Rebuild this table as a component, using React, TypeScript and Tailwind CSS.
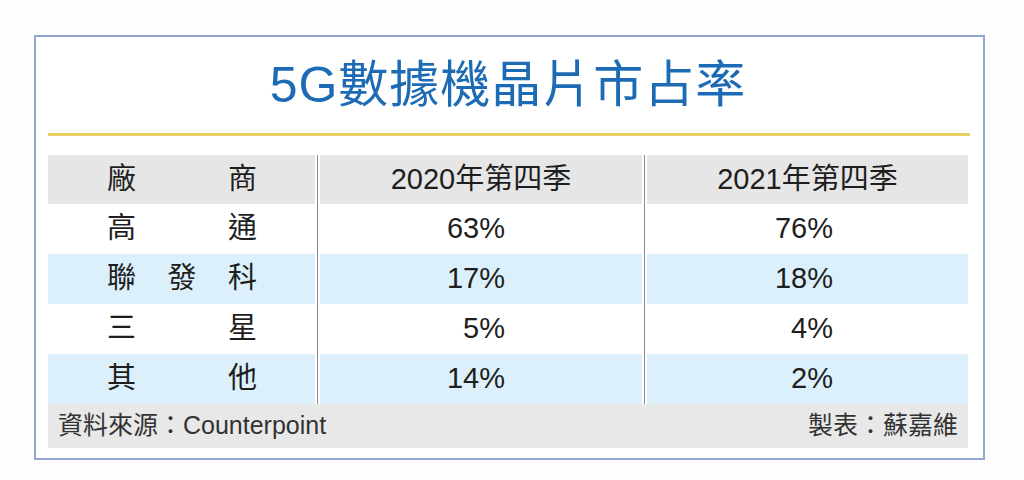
import React from 'react';

type Row = { name: string[]; a: string; b: string; blue: boolean };

const rows: Row[] = [
  { name: ['高', '通'], a: '63%', b: '76%', blue: false },
  { name: ['聯', '發', '科'], a: '17%', b: '18%', blue: true },
  { name: ['三', '星'], a: '5%', b: '4%', blue: false },
  { name: ['其', '他'], a: '14%', b: '2%', blue: true },
];

const font = { fontFamily: '"Liberation Sans", "Noto Sans CJK TC", sans-serif' };

// 欄與欄之間的白縫 + 灰色直線
const Divider = () => (
  <div className="w-[5px] h-full flex justify-center bg-white">
    <div className="w-px h-full bg-[#8a8a8a]" />
  </div>
);

const App: React.FC = () => {
  return (
    <div className="w-[1024px] h-[480px] bg-[#fdfdfd] pt-[35px] pl-[34px]" style={font}>
      <div className="w-[951px] h-[425px] border-2 border-[#91a7d2] bg-white pl-[12px] pr-[15px]">
        {/* 標題 */}
        <div className="h-[96px] flex items-center justify-center">
          <h1 className="text-[50px] leading-none text-[#1d6bb5] tracking-[1px]">5G數據機晶片市占率</h1>
        </div>
        <div className="h-[3px] bg-[#e9cf62] mr-[-2px]" />
        <div className="h-[19px]" />

        {/* 表頭 */}
        <div className="flex h-[49px] text-[29px] text-[#1e1e1e]">
          <div className="w-[267px] bg-[#e6e6e6] flex items-center">
            <div className="ml-[59px] w-[150px] flex justify-between">
              <span>廠</span>
              <span>商</span>
            </div>
          </div>
          <Divider />
          <div className="w-[322px] bg-[#e6e6e6] flex items-center justify-center">2020年第四季</div>
          <Divider />
          <div className="flex-1 bg-[#e6e6e6] flex items-center justify-center">2021年第四季</div>
        </div>

        {/* 資料列 */}
        {rows.map((r, i) => {
          const bg = r.blue ? 'bg-[#dbf0fb]' : 'bg-white';
          return (
            <div key={i} className="flex h-[50px] text-[29px] text-[#1e1e1e]">
              <div className={`w-[267px] ${bg} flex items-center`}>
                <div className="ml-[59px] w-[150px] flex justify-between">
                  {r.name.map((c, j) => (
                    <span key={j}>{c}</span>
                  ))}
                </div>
              </div>
              <Divider />
              <div className={`w-[322px] ${bg} flex items-center justify-end pr-[137px]`}>{r.a}</div>
              <Divider />
              <div className={`flex-1 ${bg} flex items-center justify-end pr-[135px]`}>{r.b}</div>
            </div>
          );
        })}

        {/* 資料來源 */}
        <div className="h-[44px] bg-[#e8e8e8] flex items-center justify-between px-[10px] text-[25px] text-[#333]">
          <span>資料來源：Counterpoint</span>
          <span>製表：蘇嘉維</span>
        </div>
      </div>
    </div>
  );
};

export default App;
